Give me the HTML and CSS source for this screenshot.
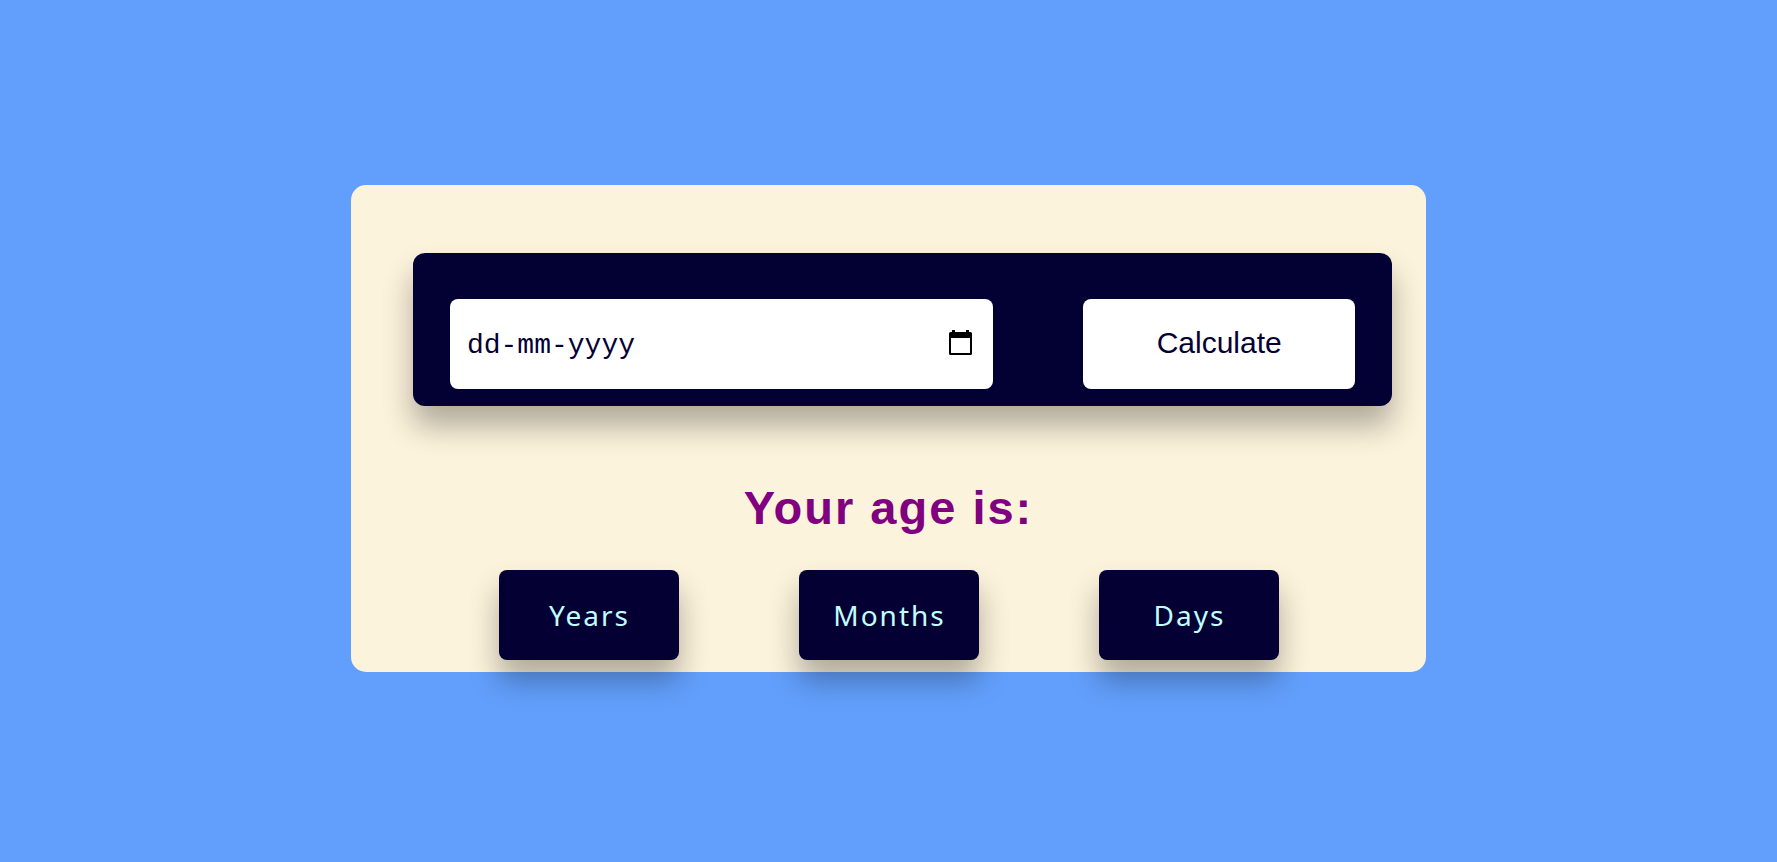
FILE: index.html
```html
<!DOCTYPE html>
<html lang="en">
<head>
<meta charset="utf-8">
<meta name="viewport" content="width=device-width, initial-scale=1">
<title>Age Calculator</title>
<link rel="stylesheet" href="styles.css">
</head>
<body>
<main class="card">
  <form class="entry">
    <div class="date-field">
      <input class="date-input" type="text" placeholder="dd-mm-yyyy" aria-label="Date of birth">
      <button class="picker" type="button" aria-label="Open calendar">
        <svg class="picker-icon" viewBox="0 0 23 25" aria-hidden="true">
          <path fill-rule="evenodd" d="M3 0h3v2h11V0h3v2h1.500a1.500 1.500 0 0 1 1.500 1.500v20a1.500 1.500 0 0 1-1.500 1.500H1.500a1.500 1.500 0 0 1-1.500-1.500V3.500A1.500 1.500 0 0 1 1.500 2H3zM2 8v15h19V8z"/>
        </svg>
      </button>
    </div>
    <button class="calculate" type="button">Calculate</button>
  </form>
  <h1 class="title">Your age is:</h1>
  <div class="results">
    <div class="result">Years</div>
    <div class="result">Months</div>
    <div class="result">Days</div>
  </div>
</main>
</body>
</html>
```

FILE: styles.css
```css
* {
  box-sizing: border-box;
}

body {
  margin: 0;
  min-height: 100vh;
  padding-bottom: 6px;
  display: flex;
  align-items: center;
  justify-content: center;
  background: #629ffc;
  font-family: "Liberation Sans", Arial, sans-serif;
}

.card {
  width: 60.5%;
  min-width: 860px;
  padding: 68px 0 12px;
  border-radius: 15px;
  background: #fcf3dc;
}

.entry {
  display: grid;
  grid-template-columns: 2fr 1fr;
  gap: 90px;
  margin: 0 34px 0 62px;
  padding: 46px 37px 17px;
  border-radius: 12px;
  background: #030033;
  box-shadow: 0 20px 30px rgba(0, 0, 0, 0.3);
}

.date-field {
  display: flex;
  align-items: center;
  height: 90px;
  padding: 0 21px 0 17px;
  border-radius: 8px;
  background: #fff;
}

.date-input {
  flex: 1;
  min-width: 0;
  padding: 4px 0 0;
  border: 0;
  outline: 0;
  background: none;
  color: #030033;
  font: 28px "Liberation Mono", monospace;
}

.date-input::placeholder {
  color: #030033;
  opacity: 1;
}

.picker {
  display: flex;
  padding: 0 0 2px;
  border: 0;
  background: none;
}

.picker-icon {
  width: 23px;
  height: 25px;
}

.calculate {
  height: 90px;
  padding: 0 0 2px;
  border: 0;
  border-radius: 8px;
  background: #fff;
  color: #030033;
  font: 30px "Liberation Sans", Arial, sans-serif;
}

.title {
  margin: 74px 0 34px;
  color: #800080;
  font-size: 47px;
  line-height: 56px;
  letter-spacing: 2px;
  text-align: center;
}

.results {
  display: flex;
  justify-content: center;
  gap: 120px;
  padding-left: 2px;
}

.result {
  width: 180px;
  border-radius: 8px;
  background: #050033;
  color: #c0ffff;
  box-shadow: 0 20px 30px rgba(0, 0, 0, 0.3);
  font: 28px/90px "Noto Sans", sans-serif;
  letter-spacing: 2px;
  text-align: center;
}
```
